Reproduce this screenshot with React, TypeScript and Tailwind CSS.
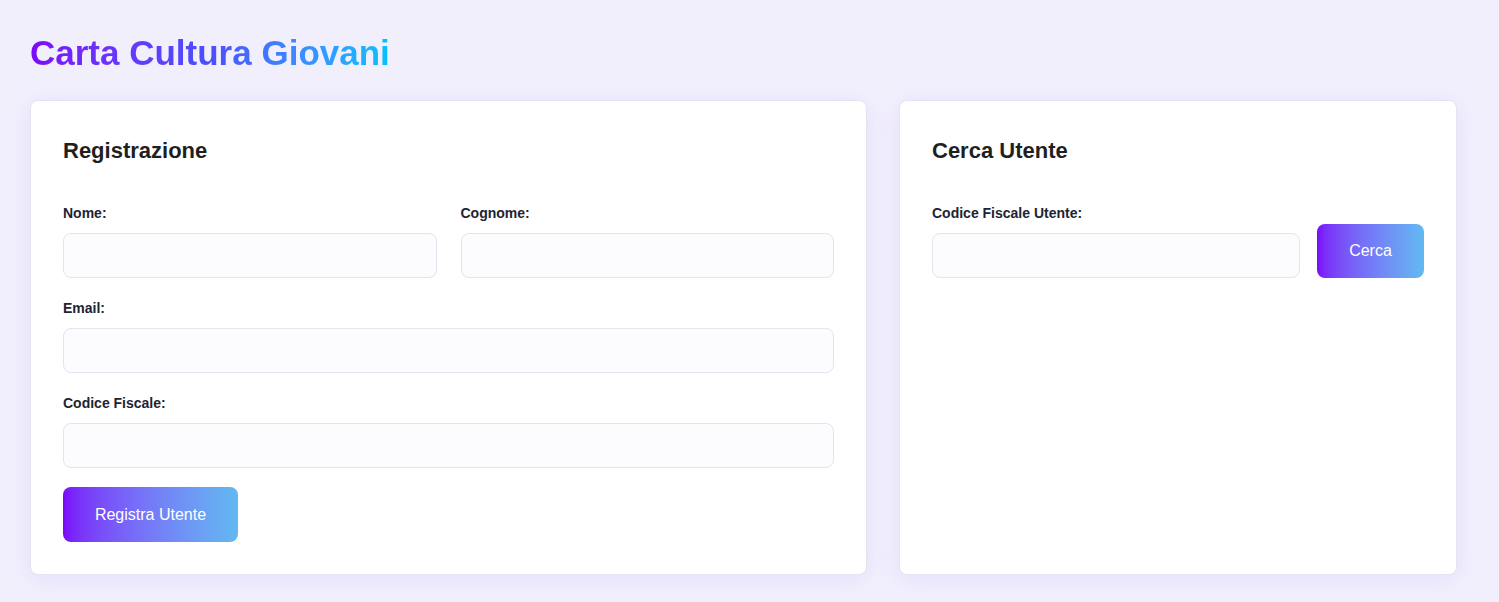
import React, { useState } from 'react';

const font = { fontFamily: '"Liberation Sans", Arial, sans-serif' };

const Field = ({ label, value, onChange }: { label: string; value: string; onChange: (v: string) => void }) => (
  <div className="flex flex-col">
    <label className="mb-[10px] block text-[14px] font-bold leading-5 text-[#1e2433]">{label}</label>
    <input
      value={value}
      onChange={(e) => onChange(e.target.value)}
      className="h-[45px] w-full rounded-lg border border-[#e2e4ee] bg-[#fcfcff] px-3 text-[15px] outline-none"
    />
  </div>
);

const App = () => {
  const [nome, setNome] = useState('');
  const [cognome, setCognome] = useState('');
  const [email, setEmail] = useState('');
  const [cf, setCf] = useState('');
  const [cerca, setCerca] = useState('');

  return (
    <div className="min-h-[602px] bg-[#f2effd] pl-[30px] pr-[40px] pt-[32px]" style={font}>
      <h1 className="mb-[26px] inline-block bg-gradient-to-r from-[#7b06f9] via-[#4a4efc] to-[#00c0ff] bg-clip-text text-[35px] font-bold leading-[42px] text-transparent">
        Carta Cultura Giovani
      </h1>

      <div className="grid grid-cols-[837px_558px] gap-[32px]">
        <div className="rounded-lg border border-[#e4e4f0] bg-white p-8 shadow-[0_4px_24px_rgba(120,90,230,0.10)]">
          <h2 className="mb-[35px] pt-px text-[22px] font-bold leading-[34px] text-[#1f1f1f]">Registrazione</h2>
          <div className="flex flex-col gap-5">
            <div className="grid grid-cols-2 gap-6">
              <Field label="Nome:" value={nome} onChange={setNome} />
              <Field label="Cognome:" value={cognome} onChange={setCognome} />
            </div>
            <Field label="Email:" value={email} onChange={setEmail} />
            <Field label="Codice Fiscale:" value={cf} onChange={setCf} />
            <div>
              <button className="-mt-px h-[55px] w-[175px] rounded-lg bg-gradient-to-r from-[#7a06f9] to-[#61b9f1] text-[16px] text-white">
                Registra Utente
              </button>
            </div>
          </div>
        </div>

        <div className="rounded-lg border border-[#e4e4f0] bg-white p-8 shadow-[0_4px_24px_rgba(120,90,230,0.10)]">
          <h2 className="mb-[35px] pt-px text-[22px] font-bold leading-[34px] text-[#1f1f1f]">Cerca Utente</h2>
          <div className="flex items-end gap-[17px]">
            <div className="flex-1">
              <Field label="Codice Fiscale Utente:" value={cerca} onChange={setCerca} />
            </div>
            <button className="h-[54px] w-[107px] rounded-lg bg-gradient-to-r from-[#7a06f9] to-[#61b9f1] text-[16px] text-white">
              Cerca
            </button>
          </div>
        </div>
      </div>
    </div>
  );
};

export default App;
